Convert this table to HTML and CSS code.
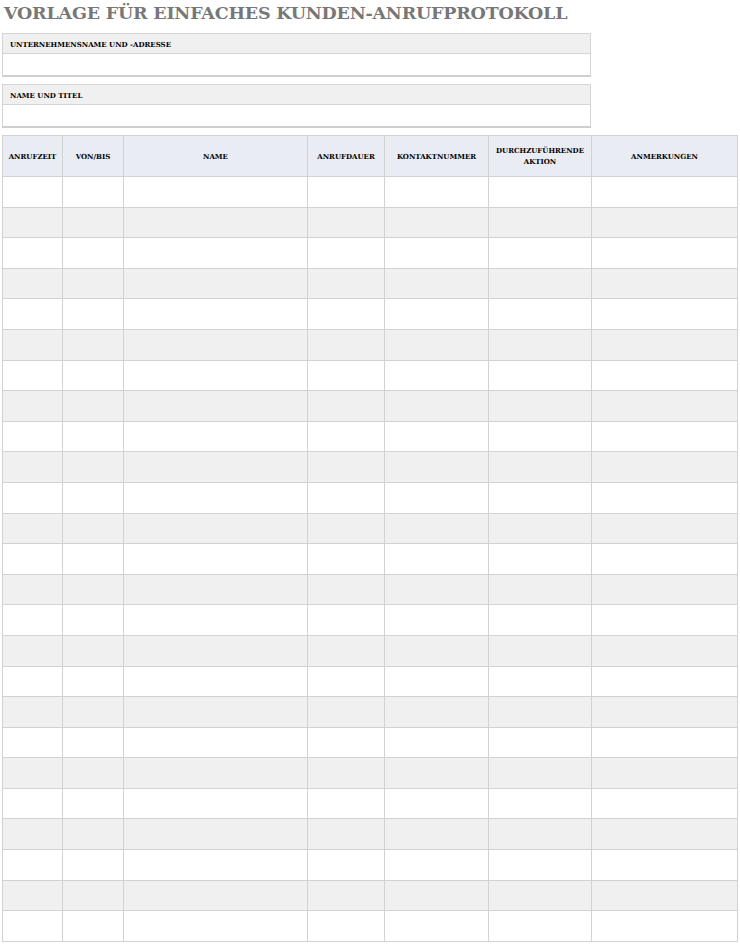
FILE: index.html
```html
<!DOCTYPE html>
<html lang="de">
<head>
<meta charset="utf-8">
<title>Vorlage für einfaches Kunden-Anrufprotokoll</title>
<link rel="stylesheet" href="styles.css">
</head>
<body>
<div class="page">
  <h1 class="title">VORLAGE FÜR EINFACHES KUNDEN-ANRUFPROTOKOLL</h1>
  <div class="field">
    <div class="field-label">UNTERNEHMENSNAME UND -ADRESSE</div>
    <div class="field-value"></div>
  </div>
  <div class="field">
    <div class="field-label">NAME UND TITEL</div>
    <div class="field-value"></div>
  </div>
  <table class="log">
    <colgroup>
      <col class="c1"><col class="c2"><col class="c3"><col class="c4"><col class="c5"><col class="c6"><col class="c7">
    </colgroup>
    <thead>
      <tr>
        <th>ANRUFZEIT</th>
        <th>VON/BIS</th>
        <th>NAME</th>
        <th>ANRUFDAUER</th>
        <th>KONTAKTNUMMER</th>
        <th>DURCHZUFÜHRENDE<br>AKTION</th>
        <th>ANMERKUNGEN</th>
      </tr>
    </thead>
    <tbody>
      <tr><td></td><td></td><td></td><td></td><td></td><td></td><td></td></tr>
      <tr><td></td><td></td><td></td><td></td><td></td><td></td><td></td></tr>
      <tr><td></td><td></td><td></td><td></td><td></td><td></td><td></td></tr>
      <tr><td></td><td></td><td></td><td></td><td></td><td></td><td></td></tr>
      <tr><td></td><td></td><td></td><td></td><td></td><td></td><td></td></tr>
      <tr><td></td><td></td><td></td><td></td><td></td><td></td><td></td></tr>
      <tr><td></td><td></td><td></td><td></td><td></td><td></td><td></td></tr>
      <tr><td></td><td></td><td></td><td></td><td></td><td></td><td></td></tr>
      <tr><td></td><td></td><td></td><td></td><td></td><td></td><td></td></tr>
      <tr><td></td><td></td><td></td><td></td><td></td><td></td><td></td></tr>
      <tr><td></td><td></td><td></td><td></td><td></td><td></td><td></td></tr>
      <tr><td></td><td></td><td></td><td></td><td></td><td></td><td></td></tr>
      <tr><td></td><td></td><td></td><td></td><td></td><td></td><td></td></tr>
      <tr><td></td><td></td><td></td><td></td><td></td><td></td><td></td></tr>
      <tr><td></td><td></td><td></td><td></td><td></td><td></td><td></td></tr>
      <tr><td></td><td></td><td></td><td></td><td></td><td></td><td></td></tr>
      <tr><td></td><td></td><td></td><td></td><td></td><td></td><td></td></tr>
      <tr><td></td><td></td><td></td><td></td><td></td><td></td><td></td></tr>
      <tr><td></td><td></td><td></td><td></td><td></td><td></td><td></td></tr>
      <tr><td></td><td></td><td></td><td></td><td></td><td></td><td></td></tr>
      <tr><td></td><td></td><td></td><td></td><td></td><td></td><td></td></tr>
      <tr><td></td><td></td><td></td><td></td><td></td><td></td><td></td></tr>
      <tr><td></td><td></td><td></td><td></td><td></td><td></td><td></td></tr>
      <tr><td></td><td></td><td></td><td></td><td></td><td></td><td></td></tr>
      <tr><td></td><td></td><td></td><td></td><td></td><td></td><td></td></tr>
    </tbody>
  </table>
</div>
</body>
</html>
```
FILE: styles.css
```css
html, body {
  margin: 0;
  padding: 0;
  background: #ffffff;
}
body {
  font-family: "DejaVu Serif", "Liberation Serif", serif;
  color: #000;
}
.page {
  width: 735px;
  padding: 2px 0 0 2px;
}
.title {
  margin: 0 0 9px 2px;
  font-family: "DejaVu Serif", serif;
  font-weight: bold;
  font-size: 17.5px;
  line-height: 22px;
  color: #777777;
  letter-spacing: -0.2px;
}
.field {
  width: 587px;
  border: 1px solid #d4d4d4;
  border-bottom: 2px solid #cfcfcf;
  margin-bottom: 7px;
}
.field-label {
  height: 18px;
  padding: 1px 0 0 7px;
  background: #f0f0f0;
  border-bottom: 1px solid #d4d4d4;
  font-size: 7px;
  font-weight: bold;
  line-height: 19px;
}
.field-value {
  height: 21px;
  background: #fff;
}
.log {
  width: 735px;
  border-collapse: collapse;
  table-layout: fixed;
}
.c1 { width: 60px; }
.c2 { width: 61px; }
.c3 { width: 184px; }
.c4 { width: 77px; }
.c5 { width: 104px; }
.c6 { width: 103px; }
.c7 { width: 146px; }
.log th, .log td {
  border: 1px solid #d2d2d2;
  padding: 0;
}
.log th {
  height: 40px;
  background: #e9ecf3;
  font-size: 7px;
  font-weight: bold;
  line-height: 11px;
  text-align: center;
  vertical-align: middle;
}
.log td {
  height: 29.6px;
}
.log tbody tr:nth-child(even) td {
  background: #f0f0f0;
}
```
